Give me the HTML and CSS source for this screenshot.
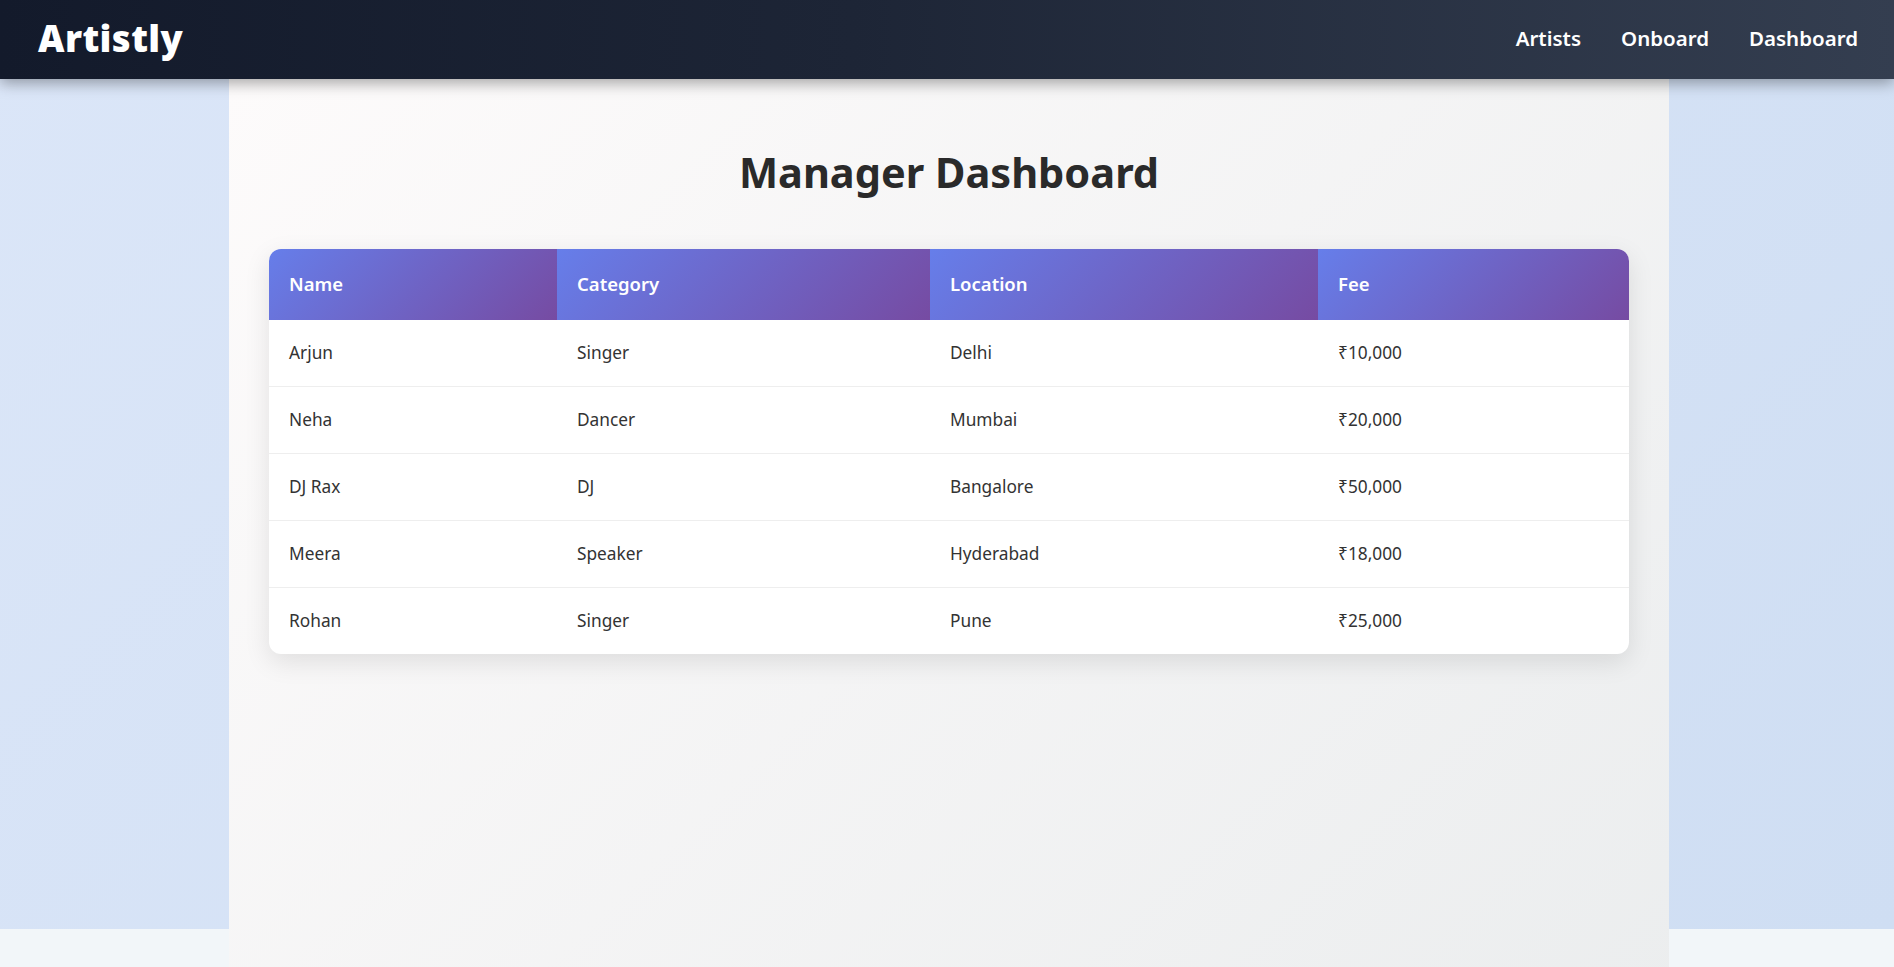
FILE: index.html
```html
<!DOCTYPE html>
<html lang="en">
<head>
<meta charset="utf-8">
<title>Artistly - Manager Dashboard</title>
<link rel="stylesheet" href="styles.css">
</head>
<body>
<header class="navbar">
  <div class="logo">Artistly</div>
  <nav class="nav-links">
    <a href="#">Artists</a>
    <a href="#">Onboard</a>
    <a href="#">Dashboard</a>
  </nav>
</header>
<main class="dashboard">
  <h1 class="title">Manager Dashboard</h1>
  <div class="table-card">
    <table class="artist-table">
      <colgroup>
        <col class="col-name">
        <col class="col-category">
        <col class="col-location">
        <col class="col-fee">
      </colgroup>
      <thead>
        <tr><th>Name</th><th>Category</th><th>Location</th><th>Fee</th></tr>
      </thead>
      <tbody>
        <tr><td>Arjun</td><td>Singer</td><td>Delhi</td><td>₹10,000</td></tr>
        <tr><td>Neha</td><td>Dancer</td><td>Mumbai</td><td>₹20,000</td></tr>
        <tr><td>DJ Rax</td><td>DJ</td><td>Bangalore</td><td>₹50,000</td></tr>
        <tr><td>Meera</td><td>Speaker</td><td>Hyderabad</td><td>₹18,000</td></tr>
        <tr><td>Rohan</td><td>Singer</td><td>Pune</td><td>₹25,000</td></tr>
      </tbody>
    </table>
  </div>
</main>
</body>
</html>
```
FILE: styles.css
```css
html {
  background: #f2f6f9;
}
body {
  margin: 0;
  display: flex;
  flex-direction: column;
  background: linear-gradient(135deg, #dbe6f8 0%, #cfdef3 100%);
  background-size: 100% 929px;
  background-repeat: no-repeat;
  font-family: "Noto Sans", "Open Sans", sans-serif;
  color: #333;
}
.navbar {
  position: relative;
  z-index: 10;
  height: 79px;
  box-sizing: border-box;
  padding: 0 36px 0 38px;
  display: flex;
  align-items: center;
  justify-content: space-between;
  background: linear-gradient(90deg, #131a2b 0%, #1d2536 45%, #343e50 100%);
  box-shadow: 0 4px 14px rgba(0, 0, 0, 0.35);
}
.logo {
  font-size: 36.5px;
  font-weight: 900;
  color: #fff;
  letter-spacing: 0.4px;
  line-height: 1;
  margin-top: -3px;
}
.nav-links {
  display: flex;
  gap: 40px;
  margin-top: -4px;
}
.nav-links a {
  color: #fff;
  text-decoration: none;
  font-size: 20.5px;
  font-weight: 600;
}
.dashboard {
  width: 1440px;
  margin: 0 0 0 calc(50% - 718px);
  box-sizing: border-box;
  min-height: 960px;
  padding: 60px 40px 40px;
  background: linear-gradient(135deg, #fdfbfb 0%, #ebedee 100%);
}
.title {
  margin: 0 0 44px;
  text-align: center;
  font-size: 41.5px;
  font-weight: 700;
  color: #2a2a2a;
  line-height: 1.6;
}
.table-card {
  background: #fff;
  border-radius: 12px;
  overflow: hidden;
  box-shadow: 0 8px 26px rgba(0, 0, 0, 0.1);
}
.artist-table {
  width: 100%;
  border-collapse: collapse;
}
.col-name { width: 288px; }
.col-category { width: 373px; }
.col-location { width: 388px; }
.col-fee { width: auto; }
.artist-table th {
  text-align: left;
  padding: 20px 20px 21px;
  line-height: 30px;
  font-size: 18.5px;
  font-weight: 600;
  color: #fff;
  background: linear-gradient(135deg, #667eea 0%, #764ba2 100%);
}
.artist-table td {
  padding: 20px 20px;
  line-height: 26px;
  font-size: 17.3px;
  color: #333;
  border-bottom: 1px solid #eee;
}
.artist-table tbody tr:last-child td {
  border-bottom: none;
}
```
